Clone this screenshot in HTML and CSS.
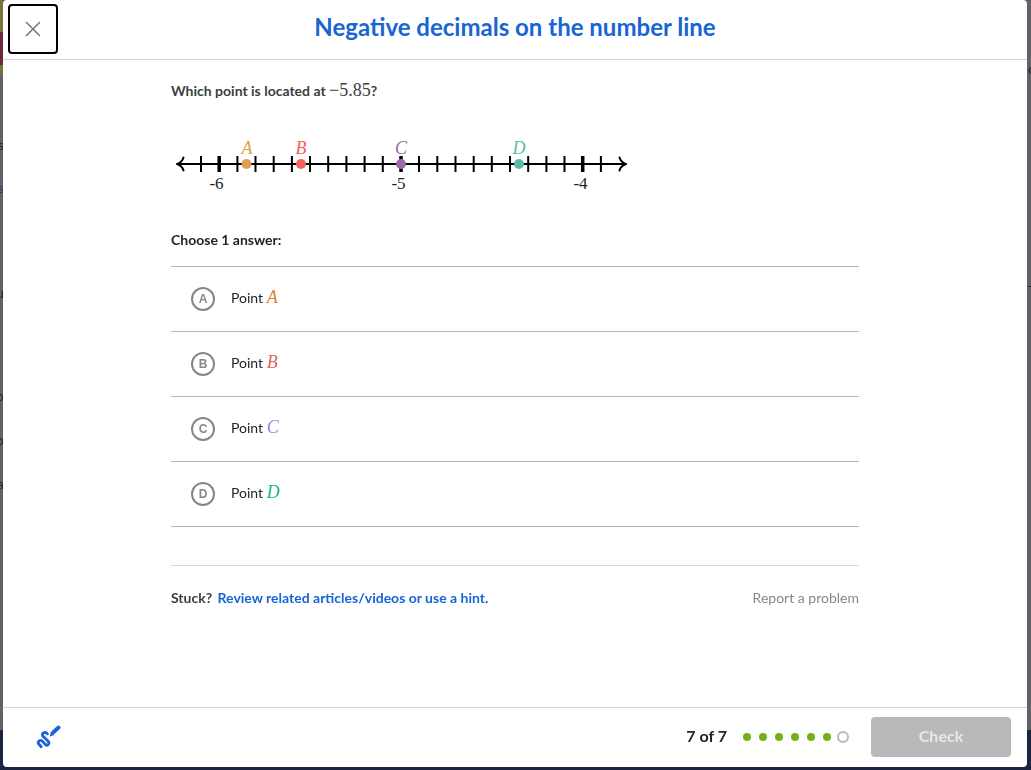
FILE: index.html
```html
<!DOCTYPE html>
<html lang="en">
  <head>
    <meta charset="utf-8" />
    <meta name="viewport" content="width=device-width, initial-scale=1.0" />
    <title>Negative decimals on the number line</title>
    <link rel="stylesheet" href="styles.css">
  </head>

  <body>
    <!-- dimmed course page behind the exercise -->
    <div class="backdrop" aria-hidden="true">
      <div class="banner"></div>
      <span class="peek peek-left" style="top: 135px">s</span>
      <span class="peek peek-left peek-link" style="top: 178px">s</span>
      <span class="peek peek-left" style="top: 283px">u</span>
      <span class="peek peek-left" style="top: 386px">o</span>
      <span class="peek peek-left" style="top: 430px">o</span>
      <span class="peek peek-left" style="top: 474px">a</span>
      <span class="peek peek-right" style="top: 59px">c</span>
      <span class="peek peek-right" style="top: 281px">T</span>
    </div>

    <main class="modal">
      <header class="modal-header">
        <button class="close" type="button" aria-label="Close">
          <svg width="16" height="16" viewBox="0 0 16 16">
            <path d="M1.5 1.5l13 13M14.5 1.5l-13 13" fill="none" stroke="#77797c" stroke-width="1.6" stroke-linecap="round" />
          </svg>
        </button>
        <h1>Negative decimals on the number line</h1>
      </header>

      <form class="exercise" id="exercise">
        <p class="question">Which point is located at <span class="math">&minus;5.85</span>?</p>

        <svg class="number-line" width="460" height="70" viewBox="171 130 460 70">
          <g fill="none" stroke="#000" stroke-width="2">
            <path d="M178 164H626" />
            <path d="M183.500 157.500C182.500 161 180 163 177 164C180 165 182.500 167 183.500 170.500" stroke-linejoin="round" stroke-linecap="round" />
            <path d="M619.500 157.500C620.500 161 623 163 626 164C623 165 620.500 167 619.500 170.500" stroke-linejoin="round" stroke-linecap="round" />
            <!-- tenths -->
            <path d="M201 156v16M237.400 156v16M255.500 156v16M273.700 156v16M291.900 156v16M310 156v16M328.200 156v16M346.400 156v16M364.600 156v16M382.800 156v16M419 156v16M437.300 156v16M455.500 156v16M473.700 156v16M491.800 156v16M510 156v16M528.200 156v16M546.400 156v16M564.500 156v16M600.900 156v16" />
            <!-- whole numbers -->
            <path d="M219.200 156v16M401 156v16M582.700 156v16" stroke-width="3.500" />
          </g>
          <g class="line-number">
            <text x="216.500" y="189">-6</text>
            <text x="398.500" y="189">-5</text>
            <text x="580.500" y="189">-4</text>
          </g>
          <g class="line-point">
            <g fill="#dba14e"><circle cx="246.500" cy="164" r="5" /><text x="247" y="154">A</text></g>
            <g fill="#f5605a"><circle cx="301" cy="164" r="5" /><text x="301" y="154">B</text></g>
            <g fill="#9b6ba8"><circle cx="401" cy="164" r="5" /><text x="401" y="154">C</text></g>
            <g fill="#55bda3"><circle cx="519" cy="164" r="5" /><text x="519" y="154">D</text></g>
          </g>
        </svg>

        <fieldset class="choices">
          <legend>Choose 1 answer:</legend>
          <label class="choice">
            <span class="bubble"><input type="radio" name="answer" value="a" /><span>A</span></span>
            <span class="choice-text">Point <i class="math gold">A</i></span>
          </label>
          <label class="choice">
            <span class="bubble"><input type="radio" name="answer" value="b" /><span>B</span></span>
            <span class="choice-text">Point <i class="math red">B</i></span>
          </label>
          <label class="choice">
            <span class="bubble"><input type="radio" name="answer" value="c" /><span>C</span></span>
            <span class="choice-text">Point <i class="math purple">C</i></span>
          </label>
          <label class="choice">
            <span class="bubble"><input type="radio" name="answer" value="d" /><span>D</span></span>
            <span class="choice-text">Point <i class="math teal">D</i></span>
          </label>
        </fieldset>

        <div class="help">
          <p>Stuck? <a href="#hint">Review related articles/videos or use a hint.</a></p>
          <a class="report" href="#report">Report a problem</a>
        </div>
      </form>

      <footer class="modal-footer">
        <button class="scratchpad" type="button" aria-label="Show scratchpad">
          <svg width="26" height="26" viewBox="0 0 26 26">
            <g fill="none" stroke="#1b62dc" stroke-linecap="round" stroke-linejoin="round">
              <path d="M12.300 9.800C10.500 7.300 6 8.800 7.800 12L13.200 17.200C15.300 20 12 22.500 10 20.200L7.800 17.600C5.500 15 1.800 17.500 3.600 19.800L6.200 22.700" stroke-width="2.800" />
              <path d="M18 8.600L23.500 3.500" stroke-width="4" />
            </g>
            <path d="M14.600 12.400L16.100 7.600L19.200 10.900Z" fill="#1b62dc" />
          </svg>
        </button>
        <span class="count">7 of 7</span>
        <div class="progress" aria-hidden="true">
          <i></i><i></i><i></i><i></i><i></i><i></i><i class="current"></i>
        </div>
        <button class="check" type="submit" form="exercise" disabled>Check</button>
      </footer>
    </main>
  </body>
</html>
```

FILE: styles.css
```css
* {
  box-sizing: border-box;
}
body {
  margin: 0;
  min-height: 100vh;
  display: flex;
  background: #616266;
  color: #3b3e40;
  font-family: Lato, "Noto Sans", sans-serif;
  font-size: 14px;
  line-height: 20px;
}
h1,
p {
  margin: 0;
}
button {
  font: inherit;
  cursor: pointer;
}
a {
  color: #1865d6;
  text-decoration: none;
}

/* page behind the modal */
.backdrop {
  position: fixed;
  inset: 0;
  overflow: hidden;
  background: linear-gradient(#1b2440, #1b2440) bottom / 100% 40px no-repeat;
}
.banner {
  width: 3px;
  height: 75px;
  background: linear-gradient(#77733c 32px, #6b2a35 32px, #6b2a35 65px, #77733c 65px);
}
.peek {
  position: absolute;
  color: #25262b;
}
.peek-left {
  right: calc(100% - 4px);
}
.peek-link {
  color: #223a78;
}
.peek-right {
  left: calc(100% - 3px);
}

.modal {
  position: relative;
  flex: 1;
  display: flex;
  flex-direction: column;
  margin: 0 4px 3px 3px;
  background: #fff;
  border-radius: 4px;
}
.modal-header {
  display: grid;
  grid-template-columns: 50px 1fr 50px;
  align-items: center;
  height: 60px;
  padding: 0 5px 2px;
  border-bottom: 1px solid #d5d6d8;
}
.modal-header h1 {
  color: #1865d6;
  font-size: 24px;
  line-height: 28px;
  text-align: center;
  padding-bottom: 4px;
}
.close {
  display: grid;
  place-items: center;
  width: 50px;
  height: 50px;
  padding: 0;
  background: #fff;
  border: 2px solid #000;
  border-radius: 4px;
}

.exercise {
  flex: 1;
  width: 100%;
  max-width: 688px;
  margin: 0 auto;
  padding-top: 21px;
}
.question,
.help p {
  font-weight: bold;
}
.math {
  font-family: "Liberation Serif", serif;
  font-size: 18px;
  font-weight: normal;
  line-height: 1;
}
.number-line {
  display: block;
  margin-top: 29px;
}
.number-line text {
  font-family: "Liberation Serif", serif;
  text-anchor: middle;
}
.line-number {
  font-size: 17px;
  fill: #222;
}
.line-point {
  font-size: 18px;
  font-style: italic;
}

.choices {
  margin: 30px 0 0;
  padding: 0;
  border: 0;
}
.choices legend {
  padding: 0 0 16px;
  color: #21242c;
  font-weight: bold;
}
.choice {
  display: flex;
  align-items: center;
  gap: 16px;
  height: 65px;
  padding: 0 20px;
  border-top: 1px solid #b3b5b8;
  color: #21242c;
  cursor: pointer;
}
.choice:last-child {
  height: 66px;
  border-bottom: 1px solid #b3b5b8;
}
.choice-text {
  padding-bottom: 2px;
}
.bubble {
  display: grid;
  place-items: center;
  color: #85878b;
  font-family: "Liberation Sans", sans-serif;
  font-size: 12px;
  font-weight: bold;
}
.bubble > * {
  grid-area: 1 / 1;
}
.bubble input {
  appearance: none;
  width: 24px;
  height: 24px;
  margin: 0;
  border: 2px solid #85878b;
  border-radius: 50%;
}
.gold {
  color: #d9822b;
}
.red {
  color: #e8625a;
}
.purple {
  color: #9583e0;
}
.teal {
  color: #14b391;
}

.help {
  display: flex;
  justify-content: space-between;
  margin-top: 38px;
  padding: 22px 0;
  border-top: 1px solid #d5d6d8;
}
.help p a {
  margin-left: 2px;
}
.help .report {
  color: #85878b;
}

.modal-footer {
  display: flex;
  align-items: center;
  height: 60px;
  padding: 0 16px 2px 32px;
  border-top: 1px solid #d5d6d8;
}
.scratchpad {
  display: flex;
  margin-right: auto;
  padding: 0;
  background: none;
  border: 0;
}
.count {
  padding-bottom: 2px;
  color: #21242c;
  font-size: 16px;
  font-weight: bold;
}
.progress {
  display: flex;
  align-items: center;
  gap: 8px;
  margin: 0 22px 0 16px;
}
.progress i {
  width: 8px;
  height: 8px;
  background: #74b01c;
  border-radius: 50%;
}
.progress .current {
  width: 12px;
  height: 12px;
  margin-left: -2px;
  background: #fff;
  border: 2px solid #b8babc;
}
.check {
  width: 140px;
  height: 40px;
  padding: 0 0 2px;
  background: #b8b9bb;
  border: 0;
  border-radius: 4px;
  color: #e8e9ea;
  font-size: 16px;
  font-weight: bold;
}
```
